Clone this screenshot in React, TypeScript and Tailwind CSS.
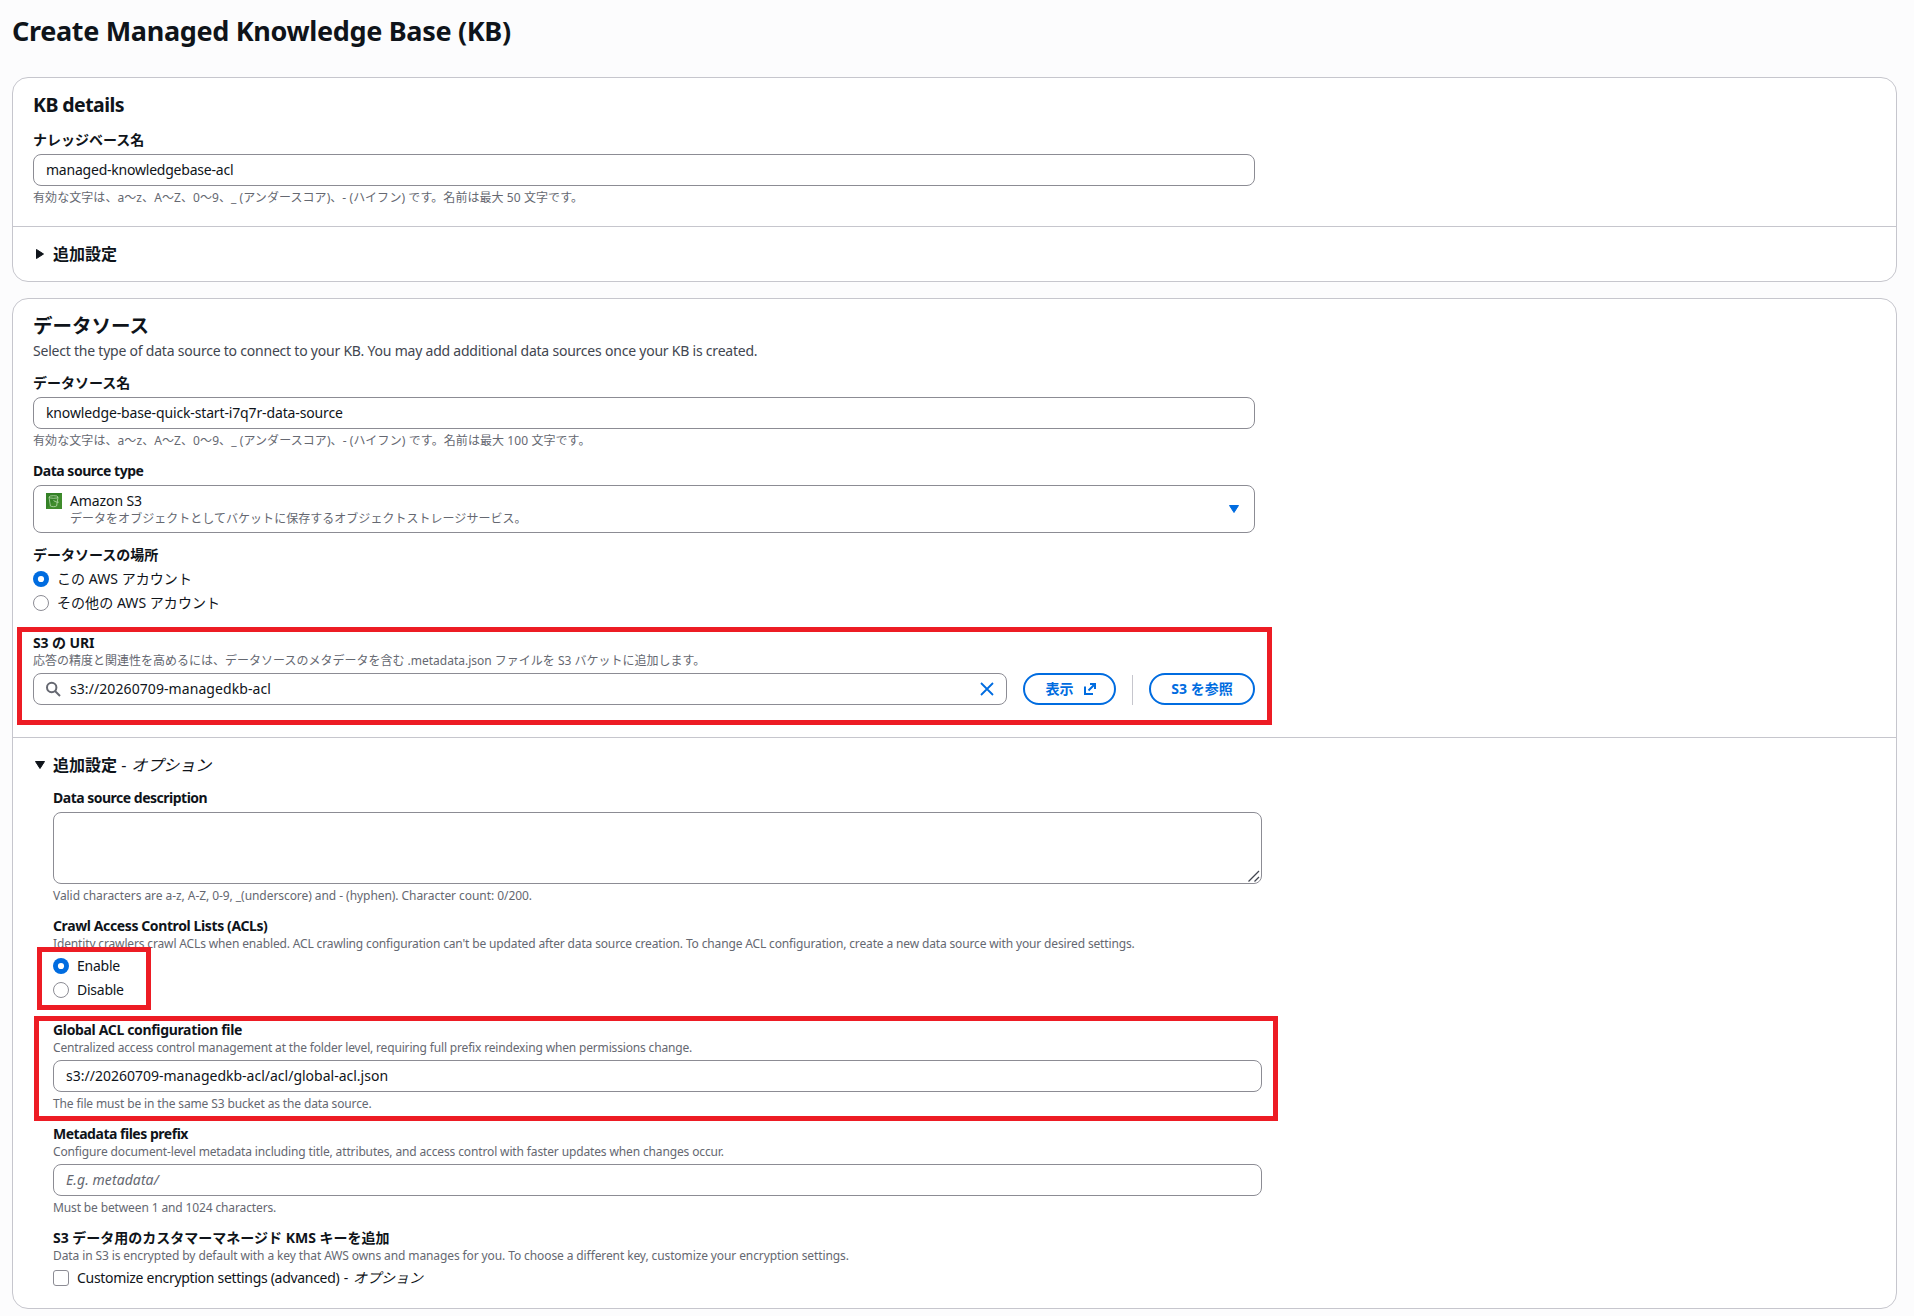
import React from 'react'
import clsx from 'clsx'

type FieldProps = {
  label: React.ReactNode
  description?: React.ReactNode
  hint?: React.ReactNode
  labelClass?: string
  descriptionClass?: string
  hintClass?: string
  children: React.ReactNode
}

const Small = ({ className, children }: { className?: string; children: React.ReactNode }) => (
  <div className={clsx('text-xs/4 whitespace-nowrap text-[#656871]', className)}>{children}</div>
)

const Field = ({ label, description, hint, labelClass, descriptionClass, hintClass, children }: FieldProps) => (
  <div>
    <div className={clsx('text-sm/5 font-bold whitespace-nowrap', labelClass)}>{label}</div>
    {description && <Small className={descriptionClass}>{description}</Small>}
    <div className="mt-1">{children}</div>
    {hint && (
      <div className="mt-1">
        <Small className={hintClass}>{hint}</Small>
      </div>
    )}
  </div>
)

const TextBox = ({ value, placeholder, className }: { value?: string; placeholder?: string; className?: string }) => (
  <div className={clsx('flex h-8 items-center rounded-lg border border-[#8c8c94] bg-white px-3 text-sm', className)}>
    {value ?? <span className="text-[#656871] italic">{placeholder}</span>}
  </div>
)

const Radio = ({ checked, children }: { checked?: boolean; children: React.ReactNode }) => (
  <div className="flex h-5 items-center gap-2 text-sm whitespace-nowrap">
    <svg className="size-4" viewBox="0 0 16 16">
      {checked ? (
        <>
          <circle cx="8" cy="8" r="8" fill="#006ce0" />
          <circle cx="8" cy="8" r="3.1" fill="#fff" />
        </>
      ) : (
        <circle cx="8" cy="8" r="7.5" fill="#fff" stroke="#8c8c94" />
      )}
    </svg>
    {children}
  </div>
)

const Caret = ({ className }: { className?: string }) => (
  <svg className={clsx('size-4 shrink-0', className)} viewBox="0 0 16 16" fill="currentColor" stroke="currentColor">
    <path d="M3.5 4.5h9L8 11.5z" strokeLinejoin="round" />
  </svg>
)

const SearchIcon = () => (
  <svg className="size-4 text-[#656871]" viewBox="0 0 16 16" fill="none" stroke="currentColor" strokeWidth="2">
    <circle cx="5.7" cy="6.5" r="4.7" />
    <path d="m9 10 5 5" />
  </svg>
)

const CloseIcon = () => (
  <svg className="size-4 text-[#006ce0]" viewBox="0 0 16 16" fill="none" stroke="currentColor" strokeWidth="1.8">
    <path d="m2 2 12 12M14 2 2 14" />
  </svg>
)

const ExternalIcon = () => (
  <svg className="size-4" viewBox="0 0 16 16" fill="none" stroke="currentColor" strokeWidth="2">
    <path d="M8 3h5v5M13 3 6.5 9.5M3 5.5V13h8" />
  </svg>
)

const S3Icon = () => (
  <svg className="size-4" viewBox="0 0 16 16" fill="none">
    <rect width="16" height="16" fill="#3f8c2c" />
    <path d="M0 0h16L0 16z" fill="#348127" />
    <g stroke="#b9dcae" strokeWidth=".8">
      <path d="M3 4.2 4.4 13c1.4.9 4.8.9 6.2 0L12 4.2" />
      <ellipse cx="7.5" cy="4" rx="4.5" ry="1.3" />
      <path d="M7.5 7.5c2 1.3 4.5 2.3 5.3 1.6" />
    </g>
  </svg>
)

const Card = ({ children }: { children: React.ReactNode }) => (
  <section className="rounded-2xl border border-[#c6c6cd] bg-white">{children}</section>
)

const Highlight = ({ className }: { className: string }) => (
  <div className={clsx('pointer-events-none absolute border-5 border-[#ed1c24]', className)} />
)

export default function App() {
  return (
    <main className="relative h-[1316px] w-[1914px] overflow-hidden bg-[#fcfcfd] pr-[17px] pl-3 font-['Noto_Sans','Noto_Sans_CJK_JP',sans-serif] text-[#0f141a]">
      <h1 className="flex h-[77px] items-start pt-[13px] text-[27px]/[36px] font-bold tracking-[-0.33px] whitespace-nowrap">
        Create Managed Knowledge Base (KB)
      </h1>

      <div className="flex flex-col gap-4">
        <Card>
          <div className="px-5 pt-[15px] pb-5">
            <h2 className="mb-[13px] text-[19.5px]/6 font-bold tracking-[-0.55px]">KB details</h2>
            <div className="w-[1222px]">
              <Field
                label="ナレッジベース名"
                hint="有効な文字は、a～z、A～Z、0～9、_ (アンダースコア)、- (ハイフン) です。名前は最大 50 文字です。"
                hintClass="tracking-[0.07px]"
              >
                <TextBox value="managed-knowledgebase-acl" className="tracking-[-0.22px]" />
              </Field>
            </div>
          </div>
          <div className="flex items-center gap-[5px] border-t border-[#c6c6cd] px-[19px] py-4 text-base/[22px] font-bold">
            <Caret className="-rotate-90" />
            追加設定
          </div>
        </Card>

        <Card>
          <div className="px-5 pt-[15px] pb-8">
            <h2 className="text-[19.5px]/6 font-bold">データソース</h2>
            <p className="mt-[3px] mb-3 text-sm/5 tracking-[-0.22px] text-[#424650]">
              Select the type of data source to connect to your KB. You may add additional data sources once your KB is
              created.
            </p>
            <div className="flex w-[1222px] flex-col gap-3">
              <Field
                label="データソース名"
                hint="有効な文字は、a～z、A～Z、0～9、_ (アンダースコア)、- (ハイフン) です。名前は最大 100 文字です。"
                hintClass="tracking-[0.08px]"
              >
                <TextBox value="knowledge-base-quick-start-i7q7r-data-source" className="tracking-[-0.14px]" />
              </Field>
              <Field label="Data source type" labelClass="tracking-[-0.48px]">
                <div className="flex h-12 items-center rounded-lg border border-[#8c8c94] px-3">
                  <div className="grow">
                    <div className="flex h-5 items-center gap-2 text-sm tracking-[-0.1px]">
                      <S3Icon />
                      Amazon S3
                    </div>
                    <div className="pl-6">
                      <Small className="tracking-[0.03px]">
                        データをオブジェクトとしてバケットに保存するオブジェクトストレージサービス。
                      </Small>
                    </div>
                  </div>
                  <Caret className="text-[#006ce0]" />
                </div>
              </Field>
              <Field label="データソースの場所">
                <div className="flex flex-col gap-1 tracking-[0.05px]">
                  <Radio checked>この AWS アカウント</Radio>
                  <Radio>その他の AWS アカウント</Radio>
                </div>
              </Field>
              <div className="pt-2">
                <Field
                  label="S3 の URI"
                  labelClass="tracking-[-0.1px]"
                  description="応答の精度と関連性を高めるには、データソースのメタデータを含む .metadata.json ファイルを S3 バケットに追加します。"
                >
                  <div className="flex h-8 items-end gap-4">
                    <div className="flex h-8 w-[974px] items-center gap-2 rounded-lg border border-[#8c8c94] pr-[11px] pl-3 text-sm tracking-[0.08px]">
                      <SearchIcon />
                      <span className="grow">s3://20260709-managedkb-acl</span>
                      <CloseIcon />
                    </div>
                    <button className="flex h-8 w-[93px] items-center justify-center gap-2 rounded-full border-2 border-[#006ce0] pl-1 text-sm font-bold text-[#006ce0]">
                      表示
                      <ExternalIcon />
                    </button>
                    <div className="h-[30px] w-px bg-[#c6c6cd]" />
                    <button className="h-8 w-[106px] rounded-full border-2 border-[#006ce0] text-sm font-bold whitespace-nowrap text-[#006ce0]">
                      S3 を参照
                    </button>
                  </div>
                </Field>
              </div>
            </div>
          </div>

          <div className="border-t border-[#c6c6cd] px-[19px] pt-4 pb-5">
            <div className="flex items-center gap-[5px] text-base/[22px] font-bold">
              <Caret />
              <span>
                追加設定 <span className="font-normal tracking-[0.4px]">- </span>
                <i className="font-normal">オプション</i>
              </span>
            </div>
            <div className="mt-3 ml-[21px] flex w-[1209px] flex-col gap-3">
              <Field
                label="Data source description"
                labelClass="tracking-[-0.5px]"
                hint="Valid characters are a-z, A-Z, 0-9, _(underscore) and - (hyphen). Character count: 0/200."
                hintClass="tracking-[-0.06px]"
              >
                <div className="flex h-[72px] items-end justify-end rounded-lg border border-[#8c8c94] p-px">
                  <svg className="size-3" viewBox="0 0 12 12" stroke="#424650" strokeWidth="1.3">
                    <path d="M.5 11.5 11 1M6.5 11.5 11 7" />
                  </svg>
                </div>
              </Field>
              <Field
                label="Crawl Access Control Lists (ACLs)"
                labelClass="tracking-[-0.39px]"
                description="Identity crawlers crawl ACLs when enabled. ACL crawling configuration can't be updated after data source creation. To change ACL configuration, create a new data source with your desired settings."
                descriptionClass="tracking-[-0.145px]"
              >
                <div className="mb-2 flex flex-col gap-1 tracking-[-0.25px]">
                  <Radio checked>Enable</Radio>
                  <Radio>Disable</Radio>
                </div>
              </Field>
              <Field
                label="Global ACL configuration file"
                labelClass="tracking-[-0.34px]"
                description="Centralized access control management at the folder level, requiring full prefix reindexing when permissions change."
                descriptionClass="tracking-[-0.165px]"
                hint="The file must be in the same S3 bucket as the data source."
                hintClass="tracking-[-0.135px]"
              >
                <TextBox value="s3://20260709-managedkb-acl/acl/global-acl.json" />
              </Field>
              <Field
                label="Metadata files prefix"
                labelClass="tracking-[-0.48px]"
                description="Configure document-level metadata including title, attributes, and access control with faster updates when changes occur."
                descriptionClass="tracking-[-0.135px]"
                hint="Must be between 1 and 1024 characters."
                hintClass="tracking-[-0.13px]"
              >
                <TextBox placeholder="E.g. metadata/" className="tracking-[0.08px]" />
              </Field>
              <Field
                label="S3 データ用のカスタマーマネージド KMS キーを追加"
                description="Data in S3 is encrypted by default with a key that AWS owns and manages for you. To choose a different key, customize your encryption settings."
                descriptionClass="tracking-[-0.105px]"
              >
                <div className="flex h-5 items-center gap-2 text-sm whitespace-nowrap">
                  <span className="size-4 rounded-[3px] border border-[#8c8c94]" />
                  <span>
                    <span className="tracking-[-0.3px]">Customize encryption settings (advanced)</span>
                    <span className="tracking-[0.6px]"> - </span>
                    <i>オプション</i>
                  </span>
                </div>
              </Field>
            </div>
          </div>
        </Card>
      </div>

      {/* Callout frames */}
      <Highlight className="top-[627px] left-[17px] h-[98px] w-[1255px]" />
      <Highlight className="top-[947px] left-[37px] h-[63px] w-[114px]" />
      <Highlight className="top-[1016px] left-[34px] h-[105px] w-[1244px]" />
    </main>
  )
}
